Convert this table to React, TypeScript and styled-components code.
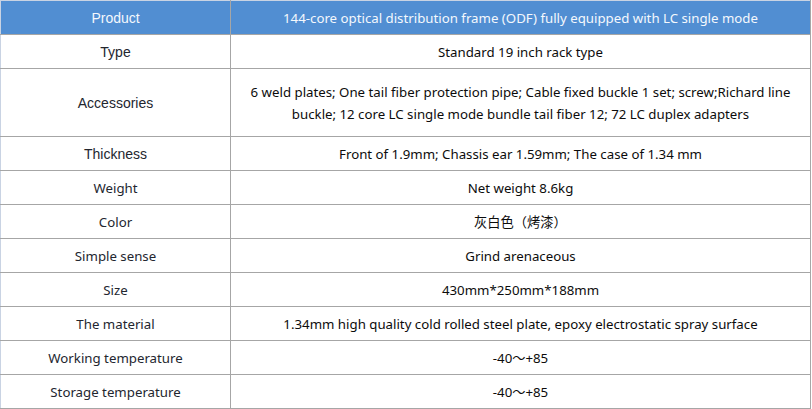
import styled, { createGlobalStyle } from "styled-components"

const GlobalStyle = createGlobalStyle`
  body {
    margin: 0;
    background: #ffffff;
  }
`

type Row = {
  label: string
  value: string[]
  arial?: boolean
}

const rows: Row[] = [
  { label: "Type", value: ["Standard 19 inch rack type"], arial: true },
  {
    label: "Accessories",
    value: [
      "6 weld plates; One tail fiber protection pipe; Cable fixed buckle 1 set; screw;Richard line",
      "buckle; 12 core LC single mode bundle tail fiber 12; 72 LC duplex adapters",
    ],
    arial: true,
  },
  { label: "Thickness", value: ["Front of 1.9mm; Chassis ear 1.59mm; The case of 1.34 mm"], arial: true },
  { label: "Weight", value: ["Net weight 8.6kg"] },
  { label: "Color", value: ["灰白色（烤漆）"] },
  { label: "Simple sense", value: ["Grind arenaceous"] },
  { label: "Size", value: ["430mm*250mm*188mm"] },
  { label: "The material", value: ["1.34mm high quality cold rolled steel plate, epoxy electrostatic spray surface"] },
  { label: "Working temperature", value: ["-40～+85"] },
  { label: "Storage temperature", value: ["-40～+85"] },
]

const App = () => {
  return (
    <>
      <GlobalStyle />
      <Table>
        <tbody>
          <HeadRow>
            <HeadCell $arial>Product</HeadCell>
            <HeadCell>144-core optical distribution frame (ODF) fully equipped with LC single mode</HeadCell>
          </HeadRow>
          {rows.map((row) => (
            <tr key={row.label}>
              <LabelCell $arial={row.arial} $tall={row.value.length > 1}>
                {row.label}
              </LabelCell>
              <ValueCell>
                {row.value.map((line) => (
                  <Line key={line}>{line}</Line>
                ))}
              </ValueCell>
            </tr>
          ))}
        </tbody>
      </Table>
    </>
  )
}

const Table = styled.table`
  width: 811px;
  border-collapse: collapse;
  table-layout: fixed;
  border-left: 1px solid #c9d3e3;
  border-top: 1px solid #c9d3e3;
  font-family: "Noto Sans", "Noto Sans CJK SC", sans-serif;
  font-size: 13.25px;
  color: #0c0c0c;

  td {
    border: 1px solid #a6a6a6;
    text-align: center;
    padding: 0 4px;
    height: 33px;
  }
  td:first-child {
    width: 221px;
    border-left-color: #c9d3e3;
  }
`

const HeadRow = styled.tr`
  background: #518ed2;
  td {
    border-top-color: #c9d3e3;
  }
`

const HeadCell = styled.td<{ $arial?: boolean }>`
  color: #f4f8fd;
  font-family: ${(p) => (p.$arial ? `"Liberation Sans", Arial, sans-serif` : `"Noto Sans", sans-serif`)};
  font-size: ${(p) => (p.$arial ? "14px" : "13.25px")};
`

const LabelCell = styled.td<{ $arial?: boolean; $tall?: boolean }>`
  color: #23262f;
  font-family: ${(p) => (p.$arial ? `"Liberation Sans", Arial, sans-serif` : `"Noto Sans", sans-serif`)};
  font-size: ${(p) => (p.$arial ? "14px" : "13.25px")};
  && {
    height: ${(p) => (p.$tall ? "67px" : "33px")};
  }
`

const ValueCell = styled.td`
  line-height: 22px;
`

const Line = styled.div``

export default App
